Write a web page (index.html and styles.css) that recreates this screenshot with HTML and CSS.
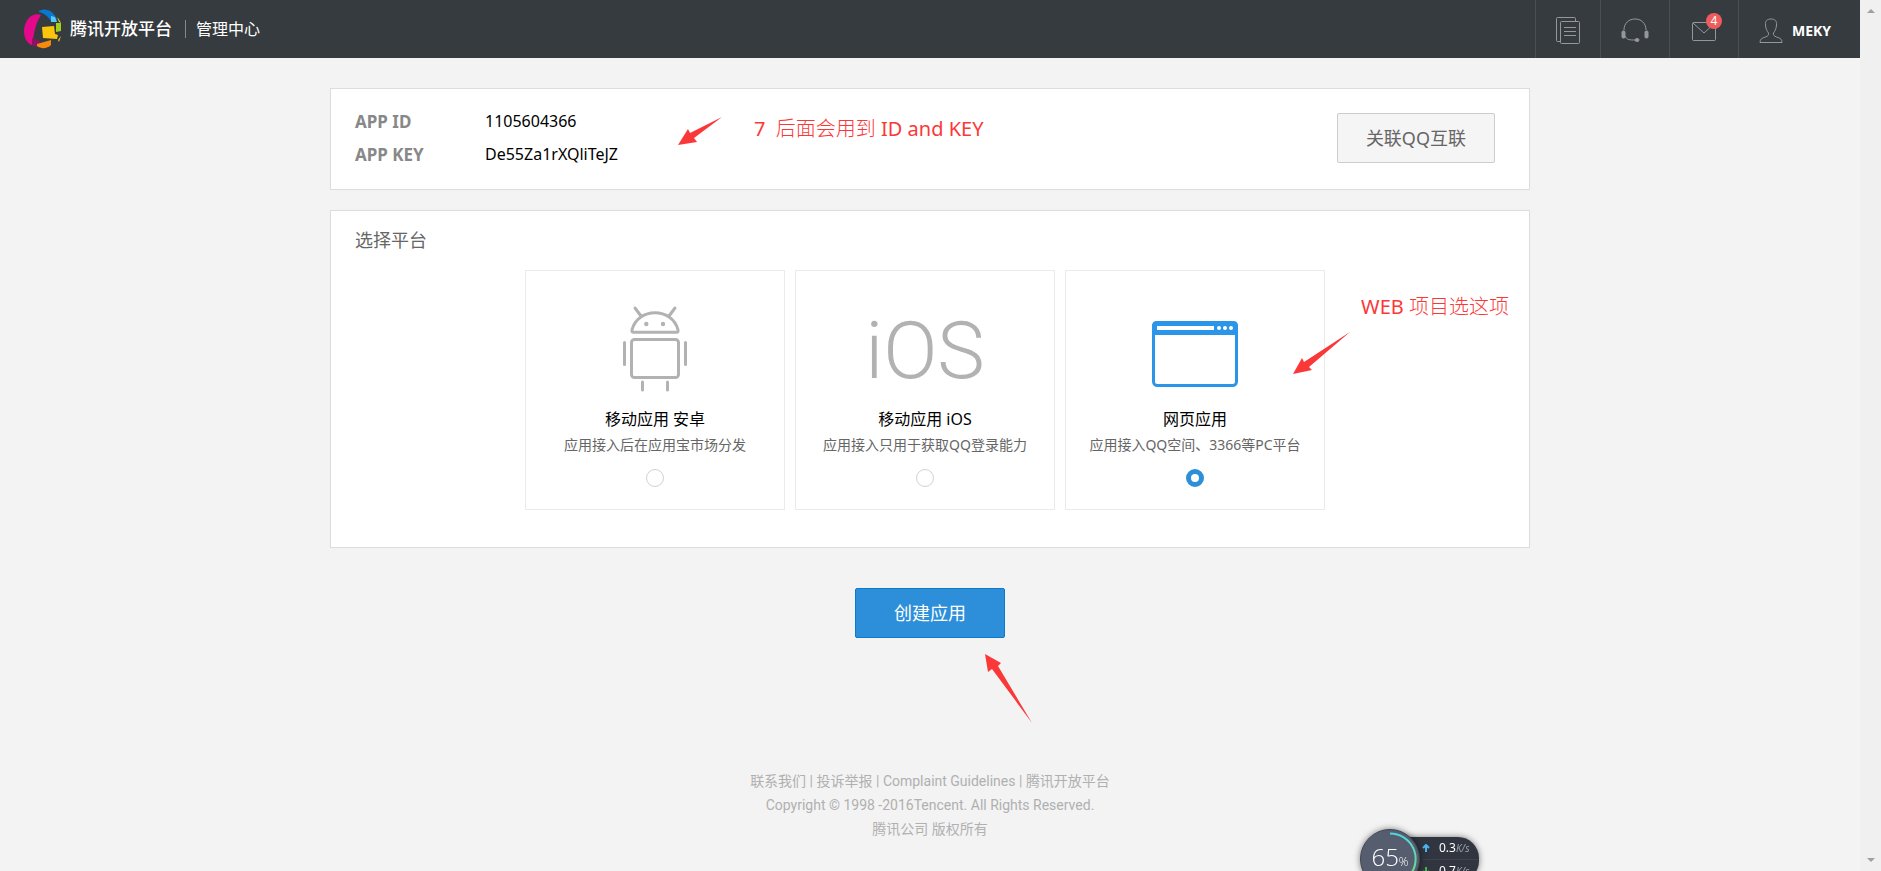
FILE: index.html
```html
<!DOCTYPE html>
<html lang="zh-CN">
<head>
<meta charset="utf-8">
<title>腾讯开放平台 管理中心</title>
<link rel="stylesheet" href="styles.css">
</head>
<body>
<div class="page">
  <header class="topbar">
    <a class="brand" href="#">
      <svg class="brand-mark" width="40" height="40" viewBox="0 0 40 40" aria-hidden="true">
        <path d="M17 6C7 2 0 13 0 22c0 8 4 13 8 14 2-11 3-21 9-30z" fill="#e5088b"/>
        <path d="M8 29l8 3-1 5c-3 1-5 0-7-1z" fill="#8d1263"/>
        <path d="M15 2c7-4 15 0 18 9l-6 1C23 6 19 4 15 3z" fill="#0878d0"/>
        <path d="M27 7l4 1 2 5h-6z" fill="#5cc8f5"/>
        <path d="M33 8c2 2 3 4 4 6l-2-1z" fill="#c9d92c"/>
        <path d="M32 14h5v8l-5 1z" fill="#a4d01c"/>
        <path d="M18 18l12-1 1 8 3 1-1 4-14-1z" fill="#fbc60a"/>
        <path d="M13 35l14-4v5c-4 4-10 4-14 1z" fill="#f58a0b"/>
        <path d="M34 31l3-4-2 6z" fill="#e8c81a"/>
      </svg>
      <strong class="brand-name">腾讯开放平台</strong>
    </a>
    <span class="brand-section">管理中心</span>
    <nav class="tools">
      <a class="tool" href="#" aria-label="文档">
        <svg width="24" height="28" viewBox="0 0 24 28"><path d="M4 25H1q-1 0-1-1V2q0-1 1-1h17q1 0 1 1v3" transform="translate(.5 .5)"/><rect x="4.500" y="5.500" width="19" height="22" rx="1"/><path d="M8 11.500h12M8 15.500h12M8 19.500h12"/></svg>
      </a>
      <a class="tool" href="#" aria-label="客服">
        <svg width="28" height="28" viewBox="0 0 28 28"><path d="M3 14C3 7 8 3 14 3s11 4 11 11M4 20c2 4 4 4 11 4"/><rect class="solid" x="1" y="15" width="3" height="7" rx="1"/><rect class="solid" x="24" y="15" width="3" height="7" rx="1"/><ellipse class="solid" cx="16" cy="24" rx="2" ry="1.500"/></svg>
      </a>
      <a class="tool" href="#" aria-label="消息">
        <svg width="28" height="28" viewBox="0 0 28 28"><rect x="2.500" y="6.500" width="23" height="18" rx="1"/><path d="M3 7l11 10L25 7"/></svg>
        <span class="badge">4</span>
      </a>
      <a class="tool user" href="#">
        <svg width="24" height="28" viewBox="0 0 24 28"><path d="M12 3C8 3 6 5 6.500 9c.3 4 1.500 6 3 8 .6 2-.5 3-3 4C3 22 1 23 1 26.500h22C23 23 21 22 17.500 21c-2.500-1-3.600-2-3-4 1.500-2 2.700-4 3-8C18 5 16 3 12 3z"/></svg>
        <b>MEKY</b>
      </a>
    </nav>
  </header>

  <main class="content">
    <section class="panel keys">
      <dl class="key-list">
        <div><dt>APP ID</dt><dd>1105604366</dd></div>
        <div><dt>APP KEY</dt><dd>De55Za1rXQliTeJZ</dd></div>
      </dl>
      <button class="btn btn-plain" type="button">关联QQ互联</button>
      <div class="note note-keys">
        <svg width="46" height="30" viewBox="0 0 46 30"><path d="M1 28L11 12l2 4L45 0 17 21l3 4z"/></svg>
        <span>7&nbsp; <span class="thin">后面会用到</span> ID and KEY</span>
      </div>
    </section>

    <section class="panel platforms">
      <h2>选择平台</h2>
      <div class="cards">
        <label class="card">
          <svg class="icon" width="120" height="100" viewBox="0 0 120 100">
            <path d="M40 7l6 8M80 7l-6 8M38.500 31.300q-2 0-1.500-2.500C43 6 77 6 83 28.800q.5 2.500-1.500 2.500z"/>
            <rect x="36.500" y="38.500" width="47" height="38" rx="3"/>
            <path d="M29.500 41.500v22M90.500 41.500v22M47.500 81v8M72.500 81v8"/>
            <circle class="dot" cx="51.300" cy="23" r="2.200"/><circle class="dot" cx="68" cy="23" r="2.200"/>
          </svg>
          <span class="card-title">移动应用 安卓</span>
          <span class="card-text">应用接入后在应用宝市场分发</span>
          <input type="radio" name="platform">
        </label>
        <label class="card">
          <svg class="icon" width="140" height="100" viewBox="0 0 140 100">
            <text class="ios" x="70" y="77" text-anchor="middle">iOS</text>
          </svg>
          <span class="card-title">移动应用 iOS</span>
          <span class="card-text">应用接入只用于获取QQ登录能力</span>
          <input type="radio" name="platform">
        </label>
        <label class="card">
          <svg class="icon web" width="120" height="100" viewBox="0 0 120 100">
            <rect x="18.500" y="21.500" width="83" height="63" rx="4"/>
            <path class="bar" d="M17 34V25q0-5 5-5h76q5 0 5 5v9z"/>
            <rect class="hole" x="22" y="25" width="57" height="4"/>
            <circle class="hole" cx="84" cy="27" r="2"/><circle class="hole" cx="90" cy="27" r="2"/><circle class="hole" cx="96" cy="27" r="2"/>
          </svg>
          <span class="card-title">网页应用</span>
          <span class="card-text">应用接入QQ空间、3366等PC平台</span>
          <input type="radio" name="platform" checked>
        </label>
      </div>
      <span class="note note-web">WEB <span class="thin">项目选这项</span></span>
      <svg class="note note-web-arrow" width="58" height="44" viewBox="0 0 58 44"><path d="M0 42L9 26l2 4L57 0 16 35l3 3z"/></svg>
    </section>

    <div class="actions">
      <button class="btn btn-primary" type="button">创建应用</button>
      <svg class="note note-create" width="48" height="70" viewBox="0 0 48 70"><path d="M0 0l16 9-3 3 34 57L7 15l-4 3z"/></svg>
    </div>
  </main>

  <footer class="footer">
    <p><a href="#">联系我们</a> | <a href="#">投诉举报</a> | <a href="#">Complaint Guidelines</a> | <a href="#">腾讯开放平台</a></p>
    <p>Copyright © 1998 -2016Tencent. All Rights Reserved.</p>
    <p>腾讯公司 版权所有</p>
  </footer>
</div>

<div class="scroll" aria-hidden="true">
  <svg width="8" height="4" viewBox="0 0 8 4"><path d="M0 4l4-4 4 4z"/></svg>
  <svg width="8" height="4" viewBox="0 0 8 4"><path d="M0 0l4 4 4-4z"/></svg>
</div>

<aside class="meter">
  <div class="dial">
    <svg class="ring" width="60" height="60" viewBox="0 0 60 60">
      <defs><linearGradient id="ringTone" x1="0" y1="0" x2="0" y2="1"><stop offset="0" stop-color="#4fd6df"/><stop offset="1" stop-color="#6fd98a"/></linearGradient></defs>
      <path d="M30 4.500A25.500 25.500 0 0 1 50 46" fill="none" stroke="url(#ringTone)" stroke-width="2"/>
    </svg>
    <span class="dial-value">65<small>%</small></span>
  </div>
  <ul class="rates">
    <li><svg class="up" width="8" height="8" viewBox="0 0 8 8"><path d="M4 8V1M1 4l3-3 3 3"/></svg><span>0.3<i>K/s</i></span></li>
    <li><svg class="down" width="8" height="8" viewBox="0 0 8 8"><path d="M4 0v7M1 4l3 3 3-3"/></svg><span>0.7<i>K/s</i></span></li>
  </ul>
</aside>
</body>
</html>
```
FILE: styles.css
```css
* { box-sizing: border-box; }

body {
  margin: 0;
  display: flex;
  height: 100vh;
  overflow: hidden;
  background: #f3f3f3;
  color: #000;
  font: 16px/24px "Noto Sans", "Noto Sans CJK SC", sans-serif;
}

a { color: inherit; text-decoration: none; }
p, h2, dl, dd, ul { margin: 0; padding: 0; }

.page { flex: 1; min-width: 0; }

.topbar {
  display: flex;
  align-items: center;
  height: 58px;
  padding-left: 24px;
  background: #363b3f;
  color: #fff;
}

.brand { display: flex; align-items: center; gap: 6px; }
.brand-name { font-size: 17px; font-weight: 500; }

.brand-section {
  margin-left: 13px;
  padding-left: 10px;
  border-left: 1px solid #85898b;
  line-height: 18px;
}

.tools { display: flex; align-self: stretch; margin-left: auto; }

.tool {
  position: relative;
  display: flex;
  align-items: center;
  padding: 2px 20px 0;
  border-left: 1px solid #4a4f53;
}

.tool svg { fill: none; stroke: #94989b; }
.tool .solid { fill: #94989b; }
.user { gap: 9px; padding-right: 27px; font-size: 14px; }
.user b { padding-top: 2px; min-width: 41px; font-family: "Open Sans", sans-serif; }

.badge {
  position: absolute;
  top: 13px;
  right: 16px;
  width: 16px;
  height: 16px;
  border-radius: 50%;
  background: #ee5c5c;
  font-size: 12px;
  line-height: 16px;
  text-align: center;
}

.content { max-width: 1200px; margin: 0 auto; padding-top: 30px; }

.panel {
  position: relative;
  margin-bottom: 20px;
  border: 1px solid #dcdcdc;
  background: #fff;
}

.keys {
  display: flex;
  align-items: center;
  justify-content: space-between;
  padding: 16px 34px 18px 24px;
}

.key-list div { display: flex; line-height: 33px; }
.key-list dt { width: 130px; color: #888; font-size: 17px; font-weight: 700; }

.btn {
  height: 50px;
  border: 1px solid;
  border-radius: 2px;
  font: inherit;
  font-size: 18px;
}

.btn-plain { padding: 0 28px; border-color: #ccc; background: #f5f5f5; color: #666; }
.btn-primary { padding: 0 38px; border-color: #0d79cc; background: #2d8fd9; color: #fff; }

.platforms { padding: 16px 24px 37px; }
.platforms h2 { color: #666; font-size: 18px; font-weight: 400; line-height: 26px; }

.cards {
  display: flex;
  justify-content: center;
  gap: 10px;
  margin-top: 17px;
  padding-right: 10px;
}

.card {
  display: flex;
  flex-direction: column;
  align-items: center;
  width: 260px;
  height: 240px;
  padding-top: 30px;
  border: 1px solid #ebebeb;
}

.icon { fill: none; stroke: #b2b2b2; stroke-width: 3; stroke-linecap: round; overflow: visible; }
.icon .dot { fill: #b2b2b2; stroke: none; }
.icon .ios { fill: #b2b2b2; stroke: none; font: 300 80px Roboto, sans-serif; }
.web { stroke: #2b95e9; }
.web .bar { fill: #2b95e9; stroke: none; }
.web .hole { fill: #fff; stroke: none; }

.card-title { line-height: 36px; }
.card-text { color: #666; font-size: 14px; line-height: 16px; }

.card input {
  appearance: none;
  width: 18px;
  height: 18px;
  margin: 16px 0 0;
  border: 1px solid #d2d2d2;
  border-radius: 50%;
  background: #fff;
}

.card input:checked { border: 5px solid #2d8fd9; }

.actions { position: relative; display: flex; justify-content: center; padding-top: 20px; }

.note { position: absolute; color: #fb3838; font-size: 20px; white-space: nowrap; }
.note path { fill: #fb3838; }
.thin { font-weight: 300; }
.note-keys { display: flex; gap: 31px; top: 28px; left: 346px; }
.note-web { top: 84px; right: 20px; }
.note-web-arrow { top: 121px; right: 178px; }
.note-create { top: 86px; left: calc(50% + 55px); }

.footer {
  margin-top: 131px;
  color: #b0b0b0;
  font-family: Roboto, "Noto Sans CJK SC", sans-serif;
  font-size: 14px;
  text-align: center;
}

.scroll {
  display: flex;
  flex-direction: column;
  justify-content: space-between;
  align-items: center;
  width: 21px;
  padding: 9px 0;
  background: #f0f0f0;
}

.scroll path { fill: #a0a0a0; }

.meter {
  position: fixed;
  right: 402px;
  bottom: -18px;
  display: flex;
  align-items: center;
  color: #fff;
}

.dial {
  position: relative;
  z-index: 1;
  display: grid;
  place-items: center;
  width: 60px;
  height: 60px;
  border: 1px solid #3f4554;
  border-radius: 50%;
  background: #565d6e;
  box-shadow: 0 0 6px rgba(0, 0, 0, .5);
}

.ring { position: absolute; inset: -1px; }
.dial-value { font: 300 24px/28px "Open Sans", sans-serif; }
.dial-value small { font-size: 12px; }

.rates {
  margin-left: -30px;
  padding-left: 32px;
  width: 89px;
  border-radius: 0 21px 21px 0;
  background: #30353f;
  box-shadow: 0 0 6px rgba(0, 0, 0, .5);
  font-size: 12px;
  line-height: 21px;
  list-style: none;
}

.rates li { display: flex; align-items: center; gap: 9px; }
.rates li + li { border-top: 1px solid #3d424c; }
.rates svg { fill: none; stroke-width: 2; }
.rates i { color: #9a9ea6; font-size: 10px; }
.up { stroke: #4db4ef; }
.down { stroke: #3fb94a; }
```
